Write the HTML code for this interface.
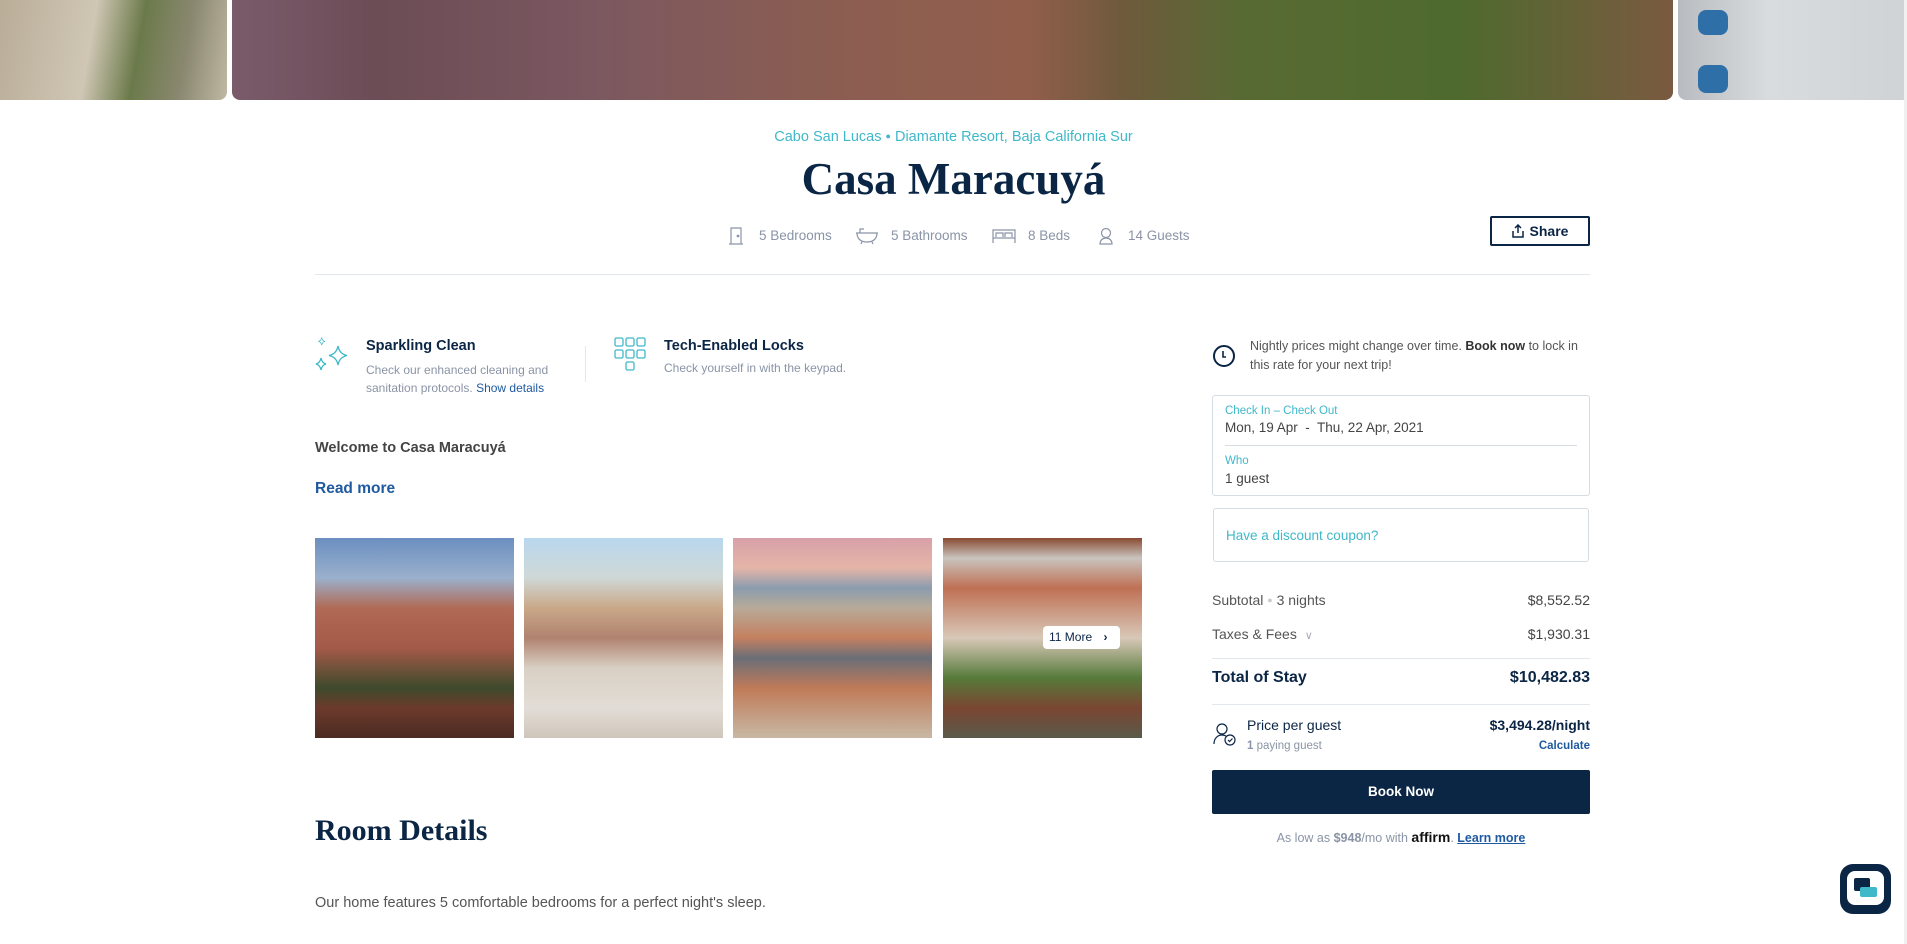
<!DOCTYPE html>
<html><head><meta charset="utf-8"><style>
*{margin:0;padding:0;box-sizing:border-box}
body{width:1907px;height:944px;overflow:hidden;background:#fff;font-family:"Liberation Sans",sans-serif;color:#444;position:relative}
.a{position:absolute}
.ser{font-family:"Liberation Serif",serif;font-weight:bold;color:#0b2545}
.teal{color:#3fb8c9}
.navy{color:#0b2545}
.link{color:#1f5aa0}
.img{position:absolute;border-radius:0}
</style></head><body>
<div class="img" style="left:0;top:0;width:227px;height:100px;border-radius:0 0 8px 0;background:linear-gradient(100deg,#b9ad98 0%,#cfc6b4 40%,#6b7a4a 60%,#8a8870 80%,#c0b8a4 100%)"></div>
<div class="img" style="left:232px;top:0;width:1441px;height:100px;border-radius:0 0 8px 8px;background:linear-gradient(90deg,#7a5b6b 0%,#6c4c55 10%,#7b5860 25%,#8a5d52 40%,#925e4c 55%,#6e5a3c 62%,#586a34 70%,#4e6a2e 85%,#7a5a40 100%)"></div>
<div class="img" style="left:1678px;top:0;width:227px;height:100px;border-radius:0 0 0 8px;background:linear-gradient(90deg,#b8bcc0,#d9dcde 40%,#cfd3d6)"></div>
<div class="a" style="left:1698px;top:10px;width:30px;height:25px;background:#2f6fa8;border-radius:8px"></div>
<div class="a" style="left:1698px;top:65px;width:30px;height:28px;background:#2f6fa8;border-radius:8px"></div>

<div class="a teal" style="left:0;width:1907px;top:129px;text-align:center;font-size:14.5px">Cabo San Lucas <span style="font-size:9px;vertical-align:2px">&#9679;</span> Diamante Resort, Baja California Sur</div>
<div class="a ser" style="left:0;width:1907px;top:153px;text-align:center;font-size:45px">Casa Maracuyá</div>

<svg class="a" style="left:728px;top:227px" width="16" height="18" viewBox="0 0 16 18" fill="none" stroke="#8a94a6" stroke-width="1.2"><path d="M3 17V1h10v16M1 17h14"/><circle cx="10" cy="9" r=".8" fill="#8a94a6"/></svg>
<div class="a" style="left:759px;top:228px;font-size:13.5px;color:#8a94a6">5 Bedrooms</div>
<svg class="a" style="left:855px;top:227px" width="24" height="18" viewBox="0 0 24 18" fill="none" stroke="#8a94a6" stroke-width="1.2"><path d="M1 6h22M2 6c0 6 4 9 10 9s10-3 10-9M5 6V2h4M7 15l-1 2M17 15l1 2"/></svg>
<div class="a" style="left:891px;top:228px;font-size:13.5px;color:#8a94a6">5 Bathrooms</div>
<svg class="a" style="left:992px;top:228px" width="24" height="16" viewBox="0 0 24 16" fill="none" stroke="#8a94a6" stroke-width="1.2"><path d="M1 15V2h22v13M1 10h22M4 9V5h7v4M13 9V5h7v4"/></svg>
<div class="a" style="left:1028px;top:228px;font-size:13.5px;color:#8a94a6">8 Beds</div>
<svg class="a" style="left:1098px;top:227px" width="16" height="18" viewBox="0 0 16 18" fill="none" stroke="#8a94a6" stroke-width="1.2"><circle cx="8" cy="6" r="4.5"/><path d="M2 17c0-4 3-6 6-6s6 2 6 6z"/></svg>
<div class="a" style="left:1128px;top:228px;font-size:13.5px;color:#8a94a6">14 Guests</div>

<div class="a" style="left:1490px;top:216px;width:100px;height:30px;border:2px solid #0b2545;border-radius:2px;font-size:14px;font-weight:bold;color:#0b2545;text-align:center;line-height:26px"><svg width="12" height="14" viewBox="0 0 12 14" fill="none" stroke="#0b2545" stroke-width="1.5" style="vertical-align:-2px;margin-right:6px"><path d="M6 9V1M3 4l3-3 3 3M1 7v6h10V7"/></svg>Share</div>

<div class="a" style="left:315px;top:274px;width:1275px;height:1px;background:#e3e8ee"></div>

<svg class="a" style="left:314px;top:337px" width="36" height="36" viewBox="0 0 36 36" fill="none" stroke="#3fb8c9" stroke-width="1.3"><path d="M10 1q1 6 6 7q-5 1-6 7q-1-6-6-7q5-1 6-7z" transform="scale(.55) translate(4,0)"/><path d="M24 9q1.5 8 9 9.5q-7.5 1.5-9 9.5q-1.5-8-9-9.5q7.5-1.5 9-9.5z"/><path d="M7 21q1 5 5 6q-4 1-5 6q-1-5-5-6q4-1 5-6z"/></svg>
<div class="a navy" style="left:366px;top:338px;font-size:14.5px;font-weight:bold">Sparkling Clean</div>
<div class="a" style="left:366px;top:361px;font-size:12px;line-height:18px;color:#8a94a6;width:200px">Check our enhanced cleaning and sanitation protocols. <span class="link">Show details</span></div>
<div class="a" style="left:585px;top:346px;width:1px;height:36px;background:#e3e8ee"></div>
<svg class="a" style="left:614px;top:337px" width="32" height="36" viewBox="0 0 32 36" fill="none" stroke="#3fb8c9" stroke-width="1.3"><rect x="1" y="1" width="8" height="8" rx="1.5"/><rect x="12" y="1" width="8" height="8" rx="1.5"/><rect x="23" y="1" width="8" height="8" rx="1.5"/><rect x="1" y="13" width="8" height="8" rx="1.5"/><rect x="12" y="13" width="8" height="8" rx="1.5"/><rect x="23" y="13" width="8" height="8" rx="1.5"/><rect x="12" y="25" width="8" height="8" rx="1.5"/></svg>
<div class="a navy" style="left:664px;top:338px;font-size:14.5px;font-weight:bold">Tech-Enabled Locks</div>
<div class="a" style="left:664px;top:361px;font-size:12px;color:#8a94a6">Check yourself in with the keypad.</div>

<div class="a" style="left:315px;top:440px;font-size:14.5px;font-weight:bold;color:#444">Welcome to Casa Maracuyá</div>
<div class="a link" style="left:315px;top:480px;font-size:15.5px;font-weight:bold">Read more</div>

<div class="img" style="left:315px;top:538px;width:199px;height:200px;background:linear-gradient(180deg,#6b8fc0 0%,#9ab0cc 20%,#b06a55 35%,#a45a48 55%,#3e4a2c 75%,#6d3a2c 85%,#4a2a22 100%)"></div>
<div class="img" style="left:524px;top:538px;width:199px;height:200px;background:linear-gradient(180deg,#b9d7ee 0%,#cfd8d6 20%,#c9a888 35%,#b08270 50%,#d8d0c4 65%,#e2ddd6 85%,#cfc6bb 100%)"></div>
<div class="img" style="left:733px;top:538px;width:199px;height:200px;background:linear-gradient(180deg,#d8a0a8 0%,#e5b5a8 15%,#8b9cae 25%,#b8aa98 35%,#c48060 50%,#6a6e78 60%,#c07a58 75%,#c8b8a4 100%)"></div>
<div class="img" style="left:943px;top:538px;width:199px;height:200px;background:linear-gradient(180deg,#8a4a32 0%,#c9c4bf 10%,#bf7054 25%,#d8c8b8 50%,#567a3a 70%,#7a4632 85%,#5a5a4a 100%)"></div>
<div class="a" style="left:1043px;top:626px;width:77px;height:23px;background:#fff;border-radius:4px;font-size:12px;color:#0b2545;line-height:23px;padding-left:6px">11 More <span style="margin-left:8px;font-weight:bold">&#8250;</span></div>

<div class="a ser" style="left:315px;top:814px;font-size:30px">Room Details</div>
<div class="a" style="left:315px;top:895px;font-size:14.5px;color:#555">Our home features 5 comfortable bedrooms for a perfect night's sleep.</div>

<svg class="a" style="left:1212px;top:344px" width="24" height="24" viewBox="0 0 24 24" fill="none" stroke="#0b2545" stroke-width="2"><circle cx="12" cy="12" r="10"/><path d="M11 7v6h3" stroke-width="1.6"/></svg>
<div class="a" style="left:1250px;top:337px;width:345px;font-size:12.5px;line-height:19px;color:#555">Nightly prices might change over time. <b style="color:#333">Book now</b> to lock in this rate for your next trip!</div>

<div class="a" style="left:1212px;top:395px;width:378px;height:101px;border:1px solid #d6dce3;border-radius:3px"></div>
<div class="a teal" style="left:1225px;top:405px;font-size:11.5px">Check In – Check Out</div>
<div class="a" style="left:1225px;top:420px;font-size:13.5px;color:#444">Mon, 19 Apr &nbsp;-&nbsp; Thu, 22 Apr, 2021</div>
<div class="a" style="left:1225px;top:445px;width:352px;height:1px;background:#d6dce3"></div>
<div class="a teal" style="left:1225px;top:455px;font-size:11.5px">Who</div>
<div class="a" style="left:1225px;top:471px;font-size:13.5px;color:#444">1 guest</div>

<div class="a" style="left:1213px;top:508px;width:376px;height:54px;border:1px solid #d6dce3;border-radius:3px"></div>
<div class="a teal" style="left:1226px;top:528px;font-size:13.5px">Have a discount coupon?</div>

<div class="a" style="left:1212px;top:592px;font-size:14px;color:#555">Subtotal <span style="color:#ccc;font-size:9px;vertical-align:2px">&#9679;</span> 3 nights</div>
<div class="a" style="right:317px;top:592px;font-size:14px;color:#444">$8,552.52</div>
<div class="a" style="left:1212px;top:626px;font-size:14px;color:#555">Taxes &amp; Fees <span style="color:#aab;font-size:11px;margin-left:4px">&#8744;</span></div>
<div class="a" style="right:317px;top:626px;font-size:14px;color:#444">$1,930.31</div>
<div class="a" style="left:1212px;top:658px;width:378px;height:1px;background:#e3e8ee"></div>
<div class="a navy" style="left:1212px;top:669px;font-size:16px;font-weight:bold">Total of Stay</div>
<div class="a navy" style="right:317px;top:669px;font-size:16px;font-weight:bold">$10,482.83</div>
<div class="a" style="left:1212px;top:704px;width:378px;height:1px;background:#e3e8ee"></div>
<svg class="a" style="left:1213px;top:722px" width="26" height="26" viewBox="0 0 26 26" fill="none" stroke="#0b2545" stroke-width="1.2"><circle cx="9" cy="7" r="5"/><path d="M1 22c0-6 4-9 8-9 2 0 3 .5 4 1"/><circle cx="17" cy="18" r="5"/><path d="M15 18l1.5 1.5 3-3"/></svg>
<div class="a navy" style="left:1247px;top:717px;font-size:14px">Price per guest</div>
<div class="a" style="left:1247px;top:740px;font-size:11.5px;color:#8a94a6"><b>1</b> paying guest</div>
<div class="a navy" style="right:317px;top:717px;font-size:14px;font-weight:bold">$3,494.28/night</div>
<div class="a link" style="right:317px;top:740px;font-size:11.5px;font-weight:bold">Calculate</div>

<div class="a" style="left:1212px;top:770px;width:378px;height:44px;background:#0b2545;border-radius:2px;color:#fff;font-size:13.5px;font-weight:bold;text-align:center;line-height:44px">Book Now</div>
<div class="a" style="left:1212px;top:829px;width:378px;text-align:center;font-size:12.5px;color:#8a94a6">As low as <b>$948</b>/mo with <b style="color:#111;font-size:14px">affirm</b>. <u class="link" style="font-weight:bold">Learn more</u></div>

<div class="a" style="left:1840px;top:864px;width:51px;height:50px;background:#0b2545;border-radius:13px"></div>
<div class="a" style="left:1847px;top:871px;width:37px;height:34px;background:#fff;border-radius:8px"></div>
<div class="a" style="left:1854px;top:878px;width:16px;height:13px;background:#0b2545;border-radius:2px"></div>
<div class="a" style="left:1860px;top:887px;width:17px;height:10px;background:#3fb8c9;border-radius:2px"></div>
<div class="a" style="left:1904px;top:0;width:3px;height:944px;background:#f0f0f0"></div>
</body></html>
